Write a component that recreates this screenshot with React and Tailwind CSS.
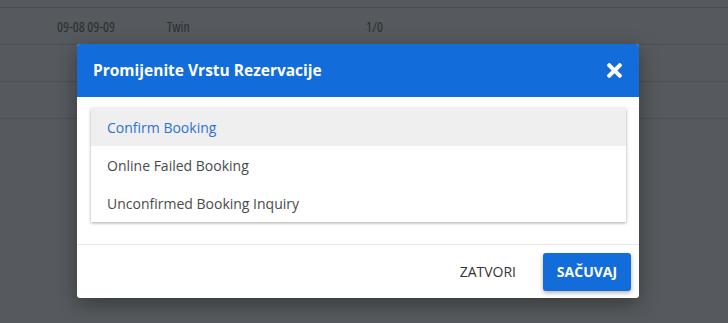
import React, { useState } from 'react';

const rows = [
  { date: '09-08 09-09', type: 'Twin', count: '1/0' },
  { date: '', type: '', count: '' },
  { date: '', type: '', count: '' },
];

const options = ['Confirm Booking', 'Online Failed Booking', 'Unconfirmed Booking Inquiry'];

const App = () => {
  const [selected, setSelected] = useState(0);

  return (
    <div className="relative h-[323px] w-[728px] overflow-hidden bg-[#56595d] text-[14px] text-[#2c2e31]" style={{ fontFamily: '"Open Sans", sans-serif' }}>
      {/* Table behind the overlay */}
      <div className="pt-[7px]">
        {rows.map((row, i) => (
          <div key={i} className="-mb-px flex h-[38px] items-center border-b border-t border-[#4d5054] font-stretch-condensed">
            <span className="ml-[57px] w-[110px]">{row.date}</span>
            <span className="w-[199px]">{row.type}</span>
            <span>{row.count}</span>
          </div>
        ))}
      </div>

      {/* Modal */}
      <div className="absolute left-[77px] top-[44px] w-[562px] overflow-hidden rounded-[3px] bg-white shadow-[0_6px_20px_rgba(0,0,0,0.35)]">
        <div className="flex h-[53px] items-center justify-between bg-[#126cd9] pl-[16px] pr-[17px]">
          <h2 className="text-[15.5px] font-bold text-white">Promijenite Vrstu Rezervacije</h2>
          <svg width="15" height="15" viewBox="0 80 352 352" className="text-white" aria-hidden="true">
            <path fill="currentColor" d="M242.72 256l100.07-100.07c12.28-12.28 12.28-32.19 0-44.48l-22.24-22.24c-12.28-12.28-32.19-12.28-44.48 0L176 189.28 75.93 89.21c-12.28-12.28-32.19-12.28-44.48 0L9.21 111.45c-12.28 12.28-12.28 32.19 0 44.48L109.28 256 9.21 356.07c-12.28 12.28-12.28 32.19 0 44.48l22.24 22.24c12.28 12.28 32.2 12.28 44.48 0L176 322.72l100.07 100.07c12.28 12.28 32.2 12.28 44.48 0l22.24-22.24c12.28-12.28 12.28-32.19 0-44.48L242.72 256z" />
          </svg>
        </div>

        <div className="pb-[22px] pl-[14px] pr-[13px] pt-[11px]">
          <ul className="bg-white shadow-[0_1px_3px_rgba(0,0,0,0.35)]">
            {options.map((opt, i) => (
              <li
                key={opt}
                onClick={() => setSelected(i)}
                className={`flex h-[38px] cursor-pointer items-center pl-[16px] ${
                  selected === i ? 'bg-[#efefef] text-[#2a72d8]' : 'text-[#4a4a4a]'
                }`}
              >
                {opt}
              </li>
            ))}
          </ul>
        </div>

        <div className="flex h-[54px] items-center justify-end border-t border-[#e8e8e8] pr-[8px]">
          <button className="mr-[27px] text-[14px] text-[#333]">ZATVORI</button>
          <button className="h-[38px] w-[88px] rounded-[3px] bg-[#126cd9] text-[14px] font-bold text-white shadow-[0_2px_4px_rgba(0,0,0,0.3)]">
            SAČUVAJ
          </button>
        </div>
      </div>
    </div>
  );
};

export default App;
